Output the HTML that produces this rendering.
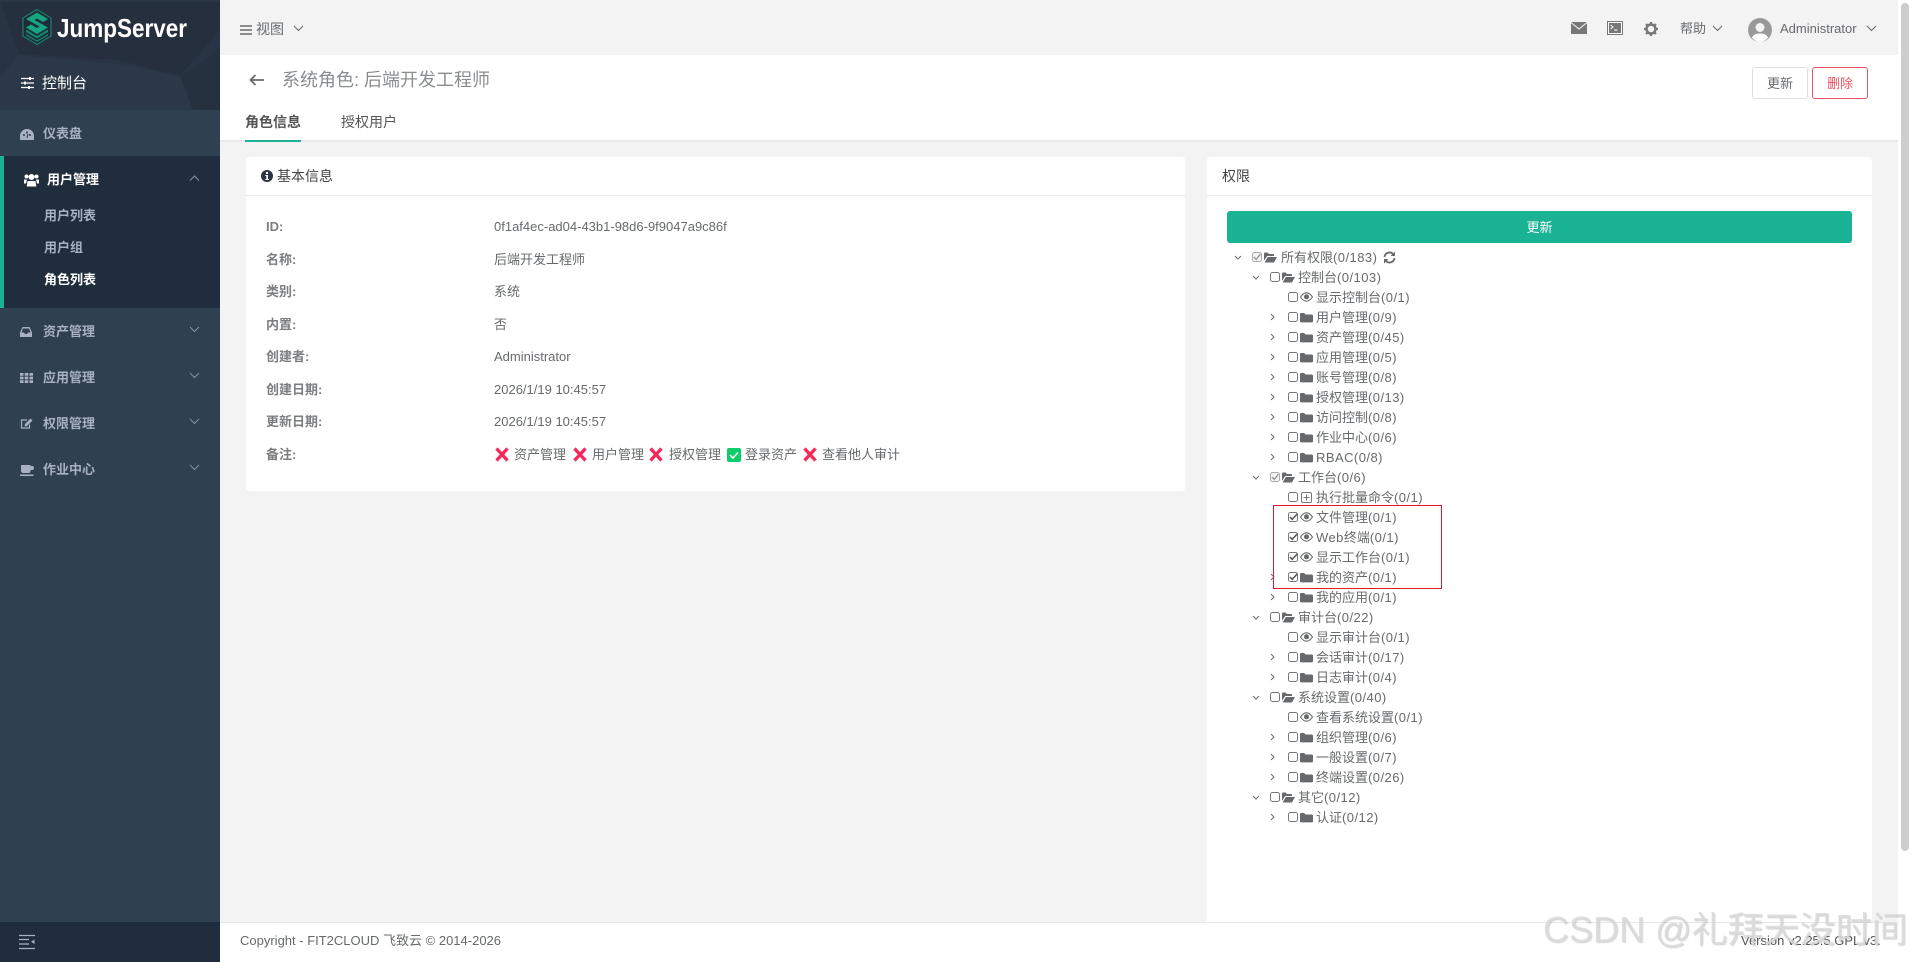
<!DOCTYPE html>
<html lang="zh-CN">
<head>
<meta charset="utf-8">
<title>JumpServer</title>
<style>
html,body{margin:0;padding:0;width:1912px;height:962px;overflow:hidden;background:#fff}
body{position:relative;font-family:"Liberation Sans","Noto Sans CJK SC",sans-serif;font-size:13px;color:#676a6c}
.b{position:absolute}
.t{position:absolute;white-space:nowrap;transform:translateY(-50%);line-height:20px;margin-top:1px}
.t u{text-decoration:none;letter-spacing:.45px}
.w{color:#fff}
.m{color:#a7b1c2;font-weight:700}
.l{font-weight:700;color:#7b7d7f}
svg.i{position:absolute;overflow:visible}
.sb{left:0;top:0;width:220px;height:962px;background:#2f4050}
</style>
</head>
<body>
<svg width="0" height="0" style="position:absolute">
<defs>
<g id="cb"><rect x=".5" y=".5" width="9" height="9" rx="2" fill="#fff" stroke="#777" stroke-width="1"/></g>
<g id="cbc"><rect x=".5" y=".5" width="9" height="9" rx="2" fill="#fff" stroke="#777" stroke-width="1"/><path d="M2 5l2.200 2.400L9.500 1.600" fill="none" stroke="#555" stroke-width="1.500"/></g>
<g id="cbh"><rect x=".5" y=".5" width="9" height="9" rx="2" fill="#f4f4f4" stroke="#aaa" stroke-width="1"/><path d="M2 5l2.200 2.400L8.500 2" fill="none" stroke="#999" stroke-width="1.400"/></g>
<path id="fo" d="M0 1.500C0 .9.4.5 1 .5h2.500L5 2h4.200c.5 0 .8.4.8.8V4H3.300L0 8.600zM3.800 5H13l-3 5.500H.6z" fill="#676a6c"/>
<path id="fc" d="M0 2C0 1.500.5 1 1.200 1h3L5.600 2.500h6c.8 0 1.400.5 1.400 1.200v5.500c0 .7-.6 1.200-1.400 1.200H1.300C.6 10.400 0 9.900 0 9.200z" fill="#676a6c"/>
<g id="ey"><path d="M.5 5C2.500 2 4.500.8 6.500.8S10.500 2 12.500 5C10.500 8 8.500 9.200 6.500 9.200S2.500 8 .5 5z" fill="none" stroke="#676a6c" stroke-width="1.100"/><circle cx="6.500" cy="4.800" r="2.500" fill="#676a6c"/></g>
<g id="pl"><rect x=".5" y=".5" width="10" height="10" rx="1.500" fill="none" stroke="#777" stroke-width="1"/><path d="M5.500 2.500v6M2.500 5.500h6" stroke="#777" stroke-width="1"/></g>
<path id="ad" d="M0 0l3 3 3-3" fill="none" stroke="#676a6c" stroke-width="1"/>
<path id="ar" d="M0 0l3 3-3 3" fill="none" stroke="#676a6c" stroke-width="1"/>
<path id="cd" d="M0 0l4.500 4.500L9 0" fill="none" stroke="#8093a8" stroke-width="1"/>
<path id="xx" d="M1.500 1.500L12.500 13.500M12.500 1.500L1.500 13.500" fill="none" stroke="#f5295a" stroke-width="3.300"/>
</defs>
</svg>

<!-- sidebar -->
<div class="b sb"></div>
<svg class="i" style="left:0;top:0" width="220" height="110" viewBox="0 0 220 110">
<rect width="220" height="110" fill="#283443"/>
<polygon points="0,0 220,0 220,30 180,76 120,60 20,54 10,30" fill="#252f3e"/>
<polygon points="0,78 18,55 120,64 180,76 193,110 0,110" fill="#2b3847"/>
<polygon points="180,76 220,50 220,110 193,110" fill="#263140"/>
<rect width="220" height="2" fill="#2a3644"/>
</svg>
<!-- logo -->
<svg class="i" style="left:22px;top:9px" width="30" height="36" viewBox="0 0 30 36">
<polygon points="15,.5 29,9 29,27 15,35.500 1,27 1,9" fill="#1d2c3a" stroke="#1d8f78" stroke-width="1"/>
<path d="M4 10l11-6.500L26 10l-5 3-6-3.500-2.500 1.500L26 18.500 15 25 4 18.500l5-3 6 3.500 2.500-1.500z" fill="#17a57f"/>
<path d="M4 20.500L15 27l11-6.500v2.500L15 29.500 4 23zM4 25l11 6.500L26 25v1.500L15 33 4 26.500z" fill="#14866b"/>
</svg>
<svg class="i" style="left:57px;top:8px" width="132" height="36">
<text x="0" y="29" font-family="Liberation Sans" font-weight="700" font-size="26" fill="#fff" textLength="130" lengthAdjust="spacingAndGlyphs">JumpServer</text>
</svg>

<svg class="i" style="left:21px;top:76px" width="14" height="14" viewBox="0 0 14 14"><path d="M0 2.500h13M0 7h13M0 11.500h13" stroke="#fff" stroke-width="1.300"/><rect x="8" y="1" width="2" height="3" fill="#fff"/><rect x="3" y="5.500" width="2" height="3" fill="#fff"/><rect x="7" y="10" width="2" height="3" fill="#fff"/></svg>
<div class="t w" style="left:42px;top:83px;font-size:15px">控制台</div>

<!-- dashboard -->
<div class="b" style="left:0;top:110px;width:220px;height:46px;background:#2f4050"></div>
<svg class="i" style="left:20px;top:129px" width="14" height="11" viewBox="0 0 14 11"><path d="M0 11V7a7 7 0 0 1 14 0v4z" fill="#a7b1c2"/><circle cx="4" cy="6" r="1" fill="#2f4050"/><circle cx="10" cy="6" r="1" fill="#2f4050"/><circle cx="7" cy="3.500" r="1" fill="#2f4050"/><path d="M7 9l1-4" stroke="#2f4050"/></svg>
<div class="t m" style="left:43px;top:133px">仪表盘</div>

<!-- user mgmt -->
<div class="b" style="left:0;top:156px;width:220px;height:152px;background:#1f2d3d"></div>
<div class="b" style="left:0;top:156px;width:4px;height:152px;background:#1ab394"></div>
<svg class="i" style="left:24px;top:173px" width="15" height="14" viewBox="0 0 15 14"><circle cx="7.500" cy="4" r="3" fill="#fff"/><circle cx="2.500" cy="3.500" r="2" fill="#fff"/><circle cx="12.500" cy="3.500" r="2" fill="#fff"/><path d="M3.500 8h8l.8 5.500H2.700z" fill="#fff"/><path d="M0 6.500h3l-1 4H0zM15 6.500h-3l1 4h2z" fill="#fff"/></svg>
<div class="t w" style="left:47px;top:179px;font-weight:700">用户管理</div>
<svg class="i" style="left:190px;top:176px" width="9" height="5"><path d="M0 4.500L4.500 0 9 4.500" fill="none" stroke="#8093a8"/></svg>
<div class="t m" style="left:44px;top:215px">用户列表</div>
<div class="t m" style="left:44px;top:247px">用户组</div>
<div class="t w" style="left:44px;top:279px;font-weight:700">角色列表</div>

<svg class="i" style="left:20px;top:327px" width="12" height="10" viewBox="0 0 12 10"><path d="M2.500 0h7L12 5.500V10H0V5.500zM3 1.500L1.500 5.500h2.500l1 1.500h2l1-1.500h2.500L9 1.500z" fill="#a7b1c2" fill-rule="evenodd"/></svg>
<div class="t m" style="left:43px;top:331px">资产管理</div>
<svg class="i" style="left:190px;top:327px" width="9" height="5"><use href="#cd"/></svg>

<svg class="i" style="left:20px;top:373px" width="13" height="10" viewBox="0 0 13 10"><path d="M0 0h3.500v2.800H0zM4.700 0h3.600v2.800H4.700zM9.500 0H13v2.800H9.500zM0 3.600h3.500v2.800H0zM4.700 3.600h3.600v2.800H4.700zM9.500 3.600H13v2.800H9.500zM0 7.200h3.500V10H0zM4.700 7.200h3.600V10H4.700zM9.500 7.200H13V10H9.500z" fill="#a7b1c2"/></svg>
<div class="t m" style="left:43px;top:377px">应用管理</div>
<svg class="i" style="left:190px;top:373px" width="9" height="5"><use href="#cd"/></svg>

<svg class="i" style="left:20px;top:418px" width="14" height="11" viewBox="0 0 14 11"><path d="M7 2H1.500v8h8V6.500" fill="none" stroke="#a7b1c2" stroke-width="1.200"/><path d="M4.500 8.500l.5-2.500L10.500.5l2 2L7 8z" fill="#a7b1c2"/></svg>
<div class="t m" style="left:43px;top:423px">权限管理</div>
<svg class="i" style="left:190px;top:419px" width="9" height="5"><use href="#cd"/></svg>

<svg class="i" style="left:20px;top:465px" width="14" height="11" viewBox="0 0 14 11"><path d="M1 0h9.500v1h1.500c1.500 0 2 1 2 2s-.5 2-2 2h-1.500v1c0 1-.8 2-2 2H3C2 8 1 7 1 6z" fill="#a7b1c2"/><path d="M0 9.500h13.500V11H0z" fill="#a7b1c2"/></svg>
<div class="t m" style="left:43px;top:469px">作业中心</div>
<svg class="i" style="left:190px;top:465px" width="9" height="5"><use href="#cd"/></svg>

<div class="b" style="left:0;top:922px;width:220px;height:40px;background:#1f2d3d"></div>
<svg class="i" style="left:19px;top:935px" width="16" height="14" viewBox="0 0 16 14"><path d="M0 .5h16M0 4.500h10M0 9h10M0 13.500h16" stroke="#a7b1c2" stroke-width="1.200"/><path d="M15.500 4.500v4.500L12 6.800z" fill="#a7b1c2"/></svg>

<!-- main bg -->
<div class="b" style="left:220px;top:0;width:1678px;height:922px;background:#f3f3f4"></div>
<!-- top header -->
<svg class="i" style="left:240px;top:25px" width="12" height="10"><path d="M0 1h12M0 5h12M0 9h12" stroke="#676a6c" stroke-width="1.500"/></svg>
<div class="t" style="left:256px;top:28px;font-size:14px">视图</div>
<svg class="i" style="left:294px;top:26px" width="9" height="5"><path d="M0 0l4.500 4.500L9 0" fill="none" stroke="#676a6c"/></svg>

<svg class="i" style="left:1571px;top:22px" width="16" height="12" viewBox="0 0 16 12"><rect width="16" height="12" fill="#777"/><path d="M0 .5l8 6.500 8-6.500" fill="none" stroke="#f3f3f4" stroke-width="1.100"/></svg>
<svg class="i" style="left:1607px;top:21px" width="16" height="14" viewBox="0 0 16 14"><rect x=".5" y=".5" width="15" height="13" fill="#fff" stroke="#777"/><rect x="2" y="2" width="12" height="10" fill="#777"/><path d="M3.500 4l2.500 2-2.500 2M7 9h3.500" fill="none" stroke="#fff"/></svg>
<svg class="i" style="left:1644px;top:22px" width="14" height="14" viewBox="0 0 14 14"><circle cx="7" cy="7" r="4.500" fill="none" stroke="#777" stroke-width="2.500"/><path d="M7 0v3M7 11v3M0 7h3M11 7h3M2 2l2 2M10 10l2 2M12 2l-2 2M4 10l-2 2" stroke="#777" stroke-width="2.200"/></svg>
<div class="t" style="left:1680px;top:28px">帮助</div>
<svg class="i" style="left:1713px;top:26px" width="9" height="5"><path d="M0 0l4.500 4.500L9 0" fill="none" stroke="#676a6c"/></svg>
<svg class="i" style="left:1748px;top:18px" width="24" height="24" viewBox="0 0 24 24"><circle cx="12" cy="12" r="12" fill="#999"/><circle cx="12" cy="9.500" r="4.500" fill="#f3f3f4"/><path d="M4 19.500c1.500-3.500 5-4 8-4s6.500.5 8 4c-2 2.800-5 4.500-8 4.500s-6-1.700-8-4.500z" fill="#fff"/></svg>
<div class="t" style="left:1780px;top:28px">Administrator</div>
<svg class="i" style="left:1867px;top:26px" width="9" height="5"><path d="M0 0l4.500 4.500L9 0" fill="none" stroke="#676a6c"/></svg>

<!-- page heading -->
<div class="b" style="left:220px;top:55px;width:1678px;height:85px;background:#fff"></div>
<div class="b" style="left:220px;top:140px;width:1678px;height:2px;background:#e7eaec"></div>
<svg class="i" style="left:249px;top:74px" width="15" height="12" viewBox="0 0 15 12"><path d="M6.500 1L1.500 6l5 5M1.500 6H15" fill="none" stroke="#676a6c" stroke-width="1.700"/></svg>
<div class="t" style="left:282px;top:79px;font-size:18px;color:#8a8d8f">系统角色: 后端开发工程师</div>
<div class="t" style="left:245px;top:121px;font-size:14px;font-weight:700;color:#555">角色信息</div>
<div class="b" style="left:245px;top:140px;width:56px;height:2px;background:#1ab394"></div>
<div class="t" style="left:341px;top:121px;font-size:14px;color:#555">授权用户</div>
<div class="b" style="left:1752px;top:67px;width:54px;height:30px;border:1px solid #dcdfe6;border-radius:3px;background:#fff;text-align:center;line-height:32px;font-size:13px">更新</div>
<div class="b" style="left:1812px;top:67px;width:54px;height:30px;border:1px solid #ed5565;border-radius:3px;background:#fff;text-align:center;line-height:32px;font-size:13px;color:#ed5565">删除</div>

<!-- left card -->
<div class="b" style="left:246px;top:157px;width:939px;height:334px;background:#fff;border-radius:3px"></div>
<div class="b" style="left:246px;top:195px;width:939px;height:1px;background:#e7eaec"></div>
<svg class="i" style="left:261px;top:170px" width="12" height="12" viewBox="0 0 12 12"><circle cx="6" cy="6" r="6" fill="#2b3440"/><rect x="5" y="2" width="2" height="2" fill="#fff"/><path d="M4.300 5h2.700v4h1v1H4.300V9h1V6h-1z" fill="#fff"/></svg>
<div class="t" style="left:277px;top:175px;font-size:14px;color:#444">基本信息</div>

<div class="t l" style="left:266px;top:226px">ID:</div><div class="t" style="left:494px;top:226px">0f1af4ec-ad04-43b1-98d6-9f9047a9c86f</div>
<div class="t l" style="left:266px;top:259px">名称:</div><div class="t" style="left:494px;top:259px">后端开发工程师</div>
<div class="t l" style="left:266px;top:291px">类别:</div><div class="t" style="left:494px;top:291px">系统</div>
<div class="t l" style="left:266px;top:324px">内置:</div><div class="t" style="left:494px;top:324px">否</div>
<div class="t l" style="left:266px;top:356px">创建者:</div><div class="t" style="left:494px;top:356px">Administrator</div>
<div class="t l" style="left:266px;top:389px">创建日期:</div><div class="t" style="left:494px;top:389px">2026/1/19 10:45:57</div>
<div class="t l" style="left:266px;top:421px">更新日期:</div><div class="t" style="left:494px;top:421px">2026/1/19 10:45:57</div>
<div class="t l" style="left:266px;top:454px">备注:</div>

<svg class="i" style="left:495px;top:447px" width="15" height="15"><use href="#xx"/></svg><div class="t" style="left:514px;top:454px">资产管理</div>
<svg class="i" style="left:573px;top:447px" width="15" height="15"><use href="#xx"/></svg><div class="t" style="left:592px;top:454px">用户管理</div>
<svg class="i" style="left:649px;top:447px" width="15" height="15"><use href="#xx"/></svg><div class="t" style="left:669px;top:454px">授权管理</div>
<svg class="i" style="left:727px;top:448px" width="14" height="14" viewBox="0 0 14 14"><rect width="14" height="14" rx="2" fill="#0bce6b"/><path d="M3 7l3 3 5-5.500" fill="none" stroke="#fff" stroke-width="1.500"/></svg><div class="t" style="left:745px;top:454px">登录资产</div>
<svg class="i" style="left:803px;top:447px" width="15" height="15"><use href="#xx"/></svg><div class="t" style="left:822px;top:454px">查看他人审计</div>

<!-- right card -->
<div class="b" style="left:1207px;top:157px;width:665px;height:765px;background:#fff;border-radius:3px 3px 0 0"></div>
<div class="b" style="left:1207px;top:195px;width:665px;height:1px;background:#e7eaec"></div>
<div class="t" style="left:1222px;top:175px;font-size:14px;color:#444">权限</div>
<div class="b" style="left:1227px;top:211px;width:625px;height:32px;background:#1ab394;border-radius:3px;color:#fff;text-align:center;line-height:33px;font-size:13px">更新</div>

<!-- tree -->
<svg class="i" style="left:1235px;top:256px" width="8" height="5"><use href="#ad"/></svg>
<svg class="i" style="left:1252px;top:252px" width="10" height="10"><use href="#cbh"/></svg>
<svg class="i" style="left:1264px;top:252px" width="13" height="11"><use href="#fo"/></svg>
<div class="t" style="left:1281px;top:257px">所有权限<u>(0/183)</u></div>
<svg class="i" style="left:1383px;top:251px" width="13" height="13" viewBox="0 0 13 13"><path d="M1.500 6a5 5 0 0 1 8.800-2.700M11.500 7a5 5 0 0 1-8.800 2.700" fill="none" stroke="#676a6c" stroke-width="1.800"/><path d="M12 .5v4.500H7.500zM1 12.500V8h4.500z" fill="#676a6c"/></svg>

<svg class="i" style="left:1253px;top:276px" width="8" height="5"><use href="#ad"/></svg>
<svg class="i" style="left:1270px;top:272px" width="10" height="10"><use href="#cb"/></svg>
<svg class="i" style="left:1282px;top:272px" width="13" height="11"><use href="#fo"/></svg>
<div class="t" style="left:1298px;top:277px">控制台<u>(0/103)</u></div>

<svg class="i" style="left:1288px;top:292px" width="10" height="10"><use href="#cb"/></svg><svg class="i" style="left:1300px;top:292px" width="13" height="10"><use href="#ey"/></svg><div class="t" style="left:1316px;top:297px">显示控制台<u>(0/1)</u></div>

<svg class="i" style="left:1271px;top:314px" width="4" height="6"><use href="#ar"/></svg><svg class="i" style="left:1288px;top:312px" width="10" height="10"><use href="#cb"/></svg><svg class="i" style="left:1300px;top:312px" width="13" height="11"><use href="#fc"/></svg><div class="t" style="left:1316px;top:317px">用户管理<u>(0/9)</u></div>
<svg class="i" style="left:1271px;top:334px" width="4" height="6"><use href="#ar"/></svg><svg class="i" style="left:1288px;top:332px" width="10" height="10"><use href="#cb"/></svg><svg class="i" style="left:1300px;top:332px" width="13" height="11"><use href="#fc"/></svg><div class="t" style="left:1316px;top:337px">资产管理<u>(0/45)</u></div>
<svg class="i" style="left:1271px;top:354px" width="4" height="6"><use href="#ar"/></svg><svg class="i" style="left:1288px;top:352px" width="10" height="10"><use href="#cb"/></svg><svg class="i" style="left:1300px;top:352px" width="13" height="11"><use href="#fc"/></svg><div class="t" style="left:1316px;top:357px">应用管理<u>(0/5)</u></div>
<svg class="i" style="left:1271px;top:374px" width="4" height="6"><use href="#ar"/></svg><svg class="i" style="left:1288px;top:372px" width="10" height="10"><use href="#cb"/></svg><svg class="i" style="left:1300px;top:372px" width="13" height="11"><use href="#fc"/></svg><div class="t" style="left:1316px;top:377px">账号管理<u>(0/8)</u></div>
<svg class="i" style="left:1271px;top:394px" width="4" height="6"><use href="#ar"/></svg><svg class="i" style="left:1288px;top:392px" width="10" height="10"><use href="#cb"/></svg><svg class="i" style="left:1300px;top:392px" width="13" height="11"><use href="#fc"/></svg><div class="t" style="left:1316px;top:397px">授权管理<u>(0/13)</u></div>
<svg class="i" style="left:1271px;top:414px" width="4" height="6"><use href="#ar"/></svg><svg class="i" style="left:1288px;top:412px" width="10" height="10"><use href="#cb"/></svg><svg class="i" style="left:1300px;top:412px" width="13" height="11"><use href="#fc"/></svg><div class="t" style="left:1316px;top:417px">访问控制<u>(0/8)</u></div>
<svg class="i" style="left:1271px;top:434px" width="4" height="6"><use href="#ar"/></svg><svg class="i" style="left:1288px;top:432px" width="10" height="10"><use href="#cb"/></svg><svg class="i" style="left:1300px;top:432px" width="13" height="11"><use href="#fc"/></svg><div class="t" style="left:1316px;top:437px">作业中心<u>(0/6)</u></div>
<svg class="i" style="left:1271px;top:454px" width="4" height="6"><use href="#ar"/></svg><svg class="i" style="left:1288px;top:452px" width="10" height="10"><use href="#cb"/></svg><svg class="i" style="left:1300px;top:452px" width="13" height="11"><use href="#fc"/></svg><div class="t" style="left:1316px;top:457px"><u>RBAC(0/8)</u></div>

<svg class="i" style="left:1253px;top:476px" width="8" height="5"><use href="#ad"/></svg>
<svg class="i" style="left:1270px;top:472px" width="10" height="10"><use href="#cbh"/></svg>
<svg class="i" style="left:1282px;top:472px" width="13" height="11"><use href="#fo"/></svg>
<div class="t" style="left:1298px;top:477px">工作台<u>(0/6)</u></div>

<svg class="i" style="left:1288px;top:492px" width="10" height="10"><use href="#cb"/></svg><svg class="i" style="left:1301px;top:492px" width="11" height="11"><use href="#pl"/></svg><div class="t" style="left:1316px;top:497px">执行批量命令<u>(0/1)</u></div>
<svg class="i" style="left:1288px;top:512px" width="10" height="10"><use href="#cbc"/></svg><svg class="i" style="left:1300px;top:512px" width="13" height="10"><use href="#ey"/></svg><div class="t" style="left:1316px;top:517px">文件管理<u>(0/1)</u></div>
<svg class="i" style="left:1288px;top:532px" width="10" height="10"><use href="#cbc"/></svg><svg class="i" style="left:1300px;top:532px" width="13" height="10"><use href="#ey"/></svg><div class="t" style="left:1316px;top:537px"><u>Web</u>终端<u>(0/1)</u></div>
<svg class="i" style="left:1288px;top:552px" width="10" height="10"><use href="#cbc"/></svg><svg class="i" style="left:1300px;top:552px" width="13" height="10"><use href="#ey"/></svg><div class="t" style="left:1316px;top:557px">显示工作台<u>(0/1)</u></div>
<svg class="i" style="left:1271px;top:574px" width="4" height="6"><use href="#ar"/></svg><svg class="i" style="left:1288px;top:572px" width="10" height="10"><use href="#cbc"/></svg><svg class="i" style="left:1300px;top:572px" width="13" height="11"><use href="#fc"/></svg><div class="t" style="left:1316px;top:577px">我的资产<u>(0/1)</u></div>
<svg class="i" style="left:1271px;top:594px" width="4" height="6"><use href="#ar"/></svg><svg class="i" style="left:1288px;top:592px" width="10" height="10"><use href="#cb"/></svg><svg class="i" style="left:1300px;top:592px" width="13" height="11"><use href="#fc"/></svg><div class="t" style="left:1316px;top:597px">我的应用<u>(0/1)</u></div>

<svg class="i" style="left:1253px;top:616px" width="8" height="5"><use href="#ad"/></svg>
<svg class="i" style="left:1270px;top:612px" width="10" height="10"><use href="#cb"/></svg>
<svg class="i" style="left:1282px;top:612px" width="13" height="11"><use href="#fo"/></svg>
<div class="t" style="left:1298px;top:617px">审计台<u>(0/22)</u></div>
<svg class="i" style="left:1288px;top:632px" width="10" height="10"><use href="#cb"/></svg><svg class="i" style="left:1300px;top:632px" width="13" height="10"><use href="#ey"/></svg><div class="t" style="left:1316px;top:637px">显示审计台<u>(0/1)</u></div>
<svg class="i" style="left:1271px;top:654px" width="4" height="6"><use href="#ar"/></svg><svg class="i" style="left:1288px;top:652px" width="10" height="10"><use href="#cb"/></svg><svg class="i" style="left:1300px;top:652px" width="13" height="11"><use href="#fc"/></svg><div class="t" style="left:1316px;top:657px">会话审计<u>(0/17)</u></div>
<svg class="i" style="left:1271px;top:674px" width="4" height="6"><use href="#ar"/></svg><svg class="i" style="left:1288px;top:672px" width="10" height="10"><use href="#cb"/></svg><svg class="i" style="left:1300px;top:672px" width="13" height="11"><use href="#fc"/></svg><div class="t" style="left:1316px;top:677px">日志审计<u>(0/4)</u></div>

<svg class="i" style="left:1253px;top:696px" width="8" height="5"><use href="#ad"/></svg>
<svg class="i" style="left:1270px;top:692px" width="10" height="10"><use href="#cb"/></svg>
<svg class="i" style="left:1282px;top:692px" width="13" height="11"><use href="#fo"/></svg>
<div class="t" style="left:1298px;top:697px">系统设置<u>(0/40)</u></div>
<svg class="i" style="left:1288px;top:712px" width="10" height="10"><use href="#cb"/></svg><svg class="i" style="left:1300px;top:712px" width="13" height="10"><use href="#ey"/></svg><div class="t" style="left:1316px;top:717px">查看系统设置<u>(0/1)</u></div>
<svg class="i" style="left:1271px;top:734px" width="4" height="6"><use href="#ar"/></svg><svg class="i" style="left:1288px;top:732px" width="10" height="10"><use href="#cb"/></svg><svg class="i" style="left:1300px;top:732px" width="13" height="11"><use href="#fc"/></svg><div class="t" style="left:1316px;top:737px">组织管理<u>(0/6)</u></div>
<svg class="i" style="left:1271px;top:754px" width="4" height="6"><use href="#ar"/></svg><svg class="i" style="left:1288px;top:752px" width="10" height="10"><use href="#cb"/></svg><svg class="i" style="left:1300px;top:752px" width="13" height="11"><use href="#fc"/></svg><div class="t" style="left:1316px;top:757px">一般设置<u>(0/7)</u></div>
<svg class="i" style="left:1271px;top:774px" width="4" height="6"><use href="#ar"/></svg><svg class="i" style="left:1288px;top:772px" width="10" height="10"><use href="#cb"/></svg><svg class="i" style="left:1300px;top:772px" width="13" height="11"><use href="#fc"/></svg><div class="t" style="left:1316px;top:777px">终端设置<u>(0/26)</u></div>

<svg class="i" style="left:1253px;top:796px" width="8" height="5"><use href="#ad"/></svg>
<svg class="i" style="left:1270px;top:792px" width="10" height="10"><use href="#cb"/></svg>
<svg class="i" style="left:1282px;top:792px" width="13" height="11"><use href="#fo"/></svg>
<div class="t" style="left:1298px;top:797px">其它<u>(0/12)</u></div>
<svg class="i" style="left:1271px;top:814px" width="4" height="6"><use href="#ar"/></svg><svg class="i" style="left:1288px;top:812px" width="10" height="10"><use href="#cb"/></svg><svg class="i" style="left:1300px;top:812px" width="13" height="11"><use href="#fc"/></svg><div class="t" style="left:1316px;top:817px">认证<u>(0/12)</u></div>

<!-- red annotation -->
<div class="b" style="left:1273px;top:505px;width:167px;height:82px;border:1.500px solid #e2192c"></div>

<!-- footer -->
<div class="b" style="left:220px;top:922px;width:1692px;height:40px;background:#fff;border-top:1px solid #e7eaec;box-sizing:border-box"></div>
<div class="t" style="left:240px;top:940px;font-size:13px">Copyright - FIT2CLOUD 飞致云 © 2014-2026</div>
<div class="t" style="left:1741px;top:940px;font-size:13px;color:#555">Version v2.25.5 GPL v3.</div>

<!-- scrollbar -->
<div class="b" style="left:1898px;top:0;width:14px;height:962px;background:#fff"></div>
<div class="b" style="left:1901px;top:3px;width:8px;height:848px;background:#cdcdcd;border-radius:4px"></div>

<!-- watermark -->
<div class="b" style="left:1543px;top:908px;font-size:36px;line-height:44px;white-space:nowrap;color:rgba(218,218,218,.85);text-shadow:1px 1px 1px rgba(120,120,120,.3)">CSDN @礼拜天没时间</div>
</body>
</html>
